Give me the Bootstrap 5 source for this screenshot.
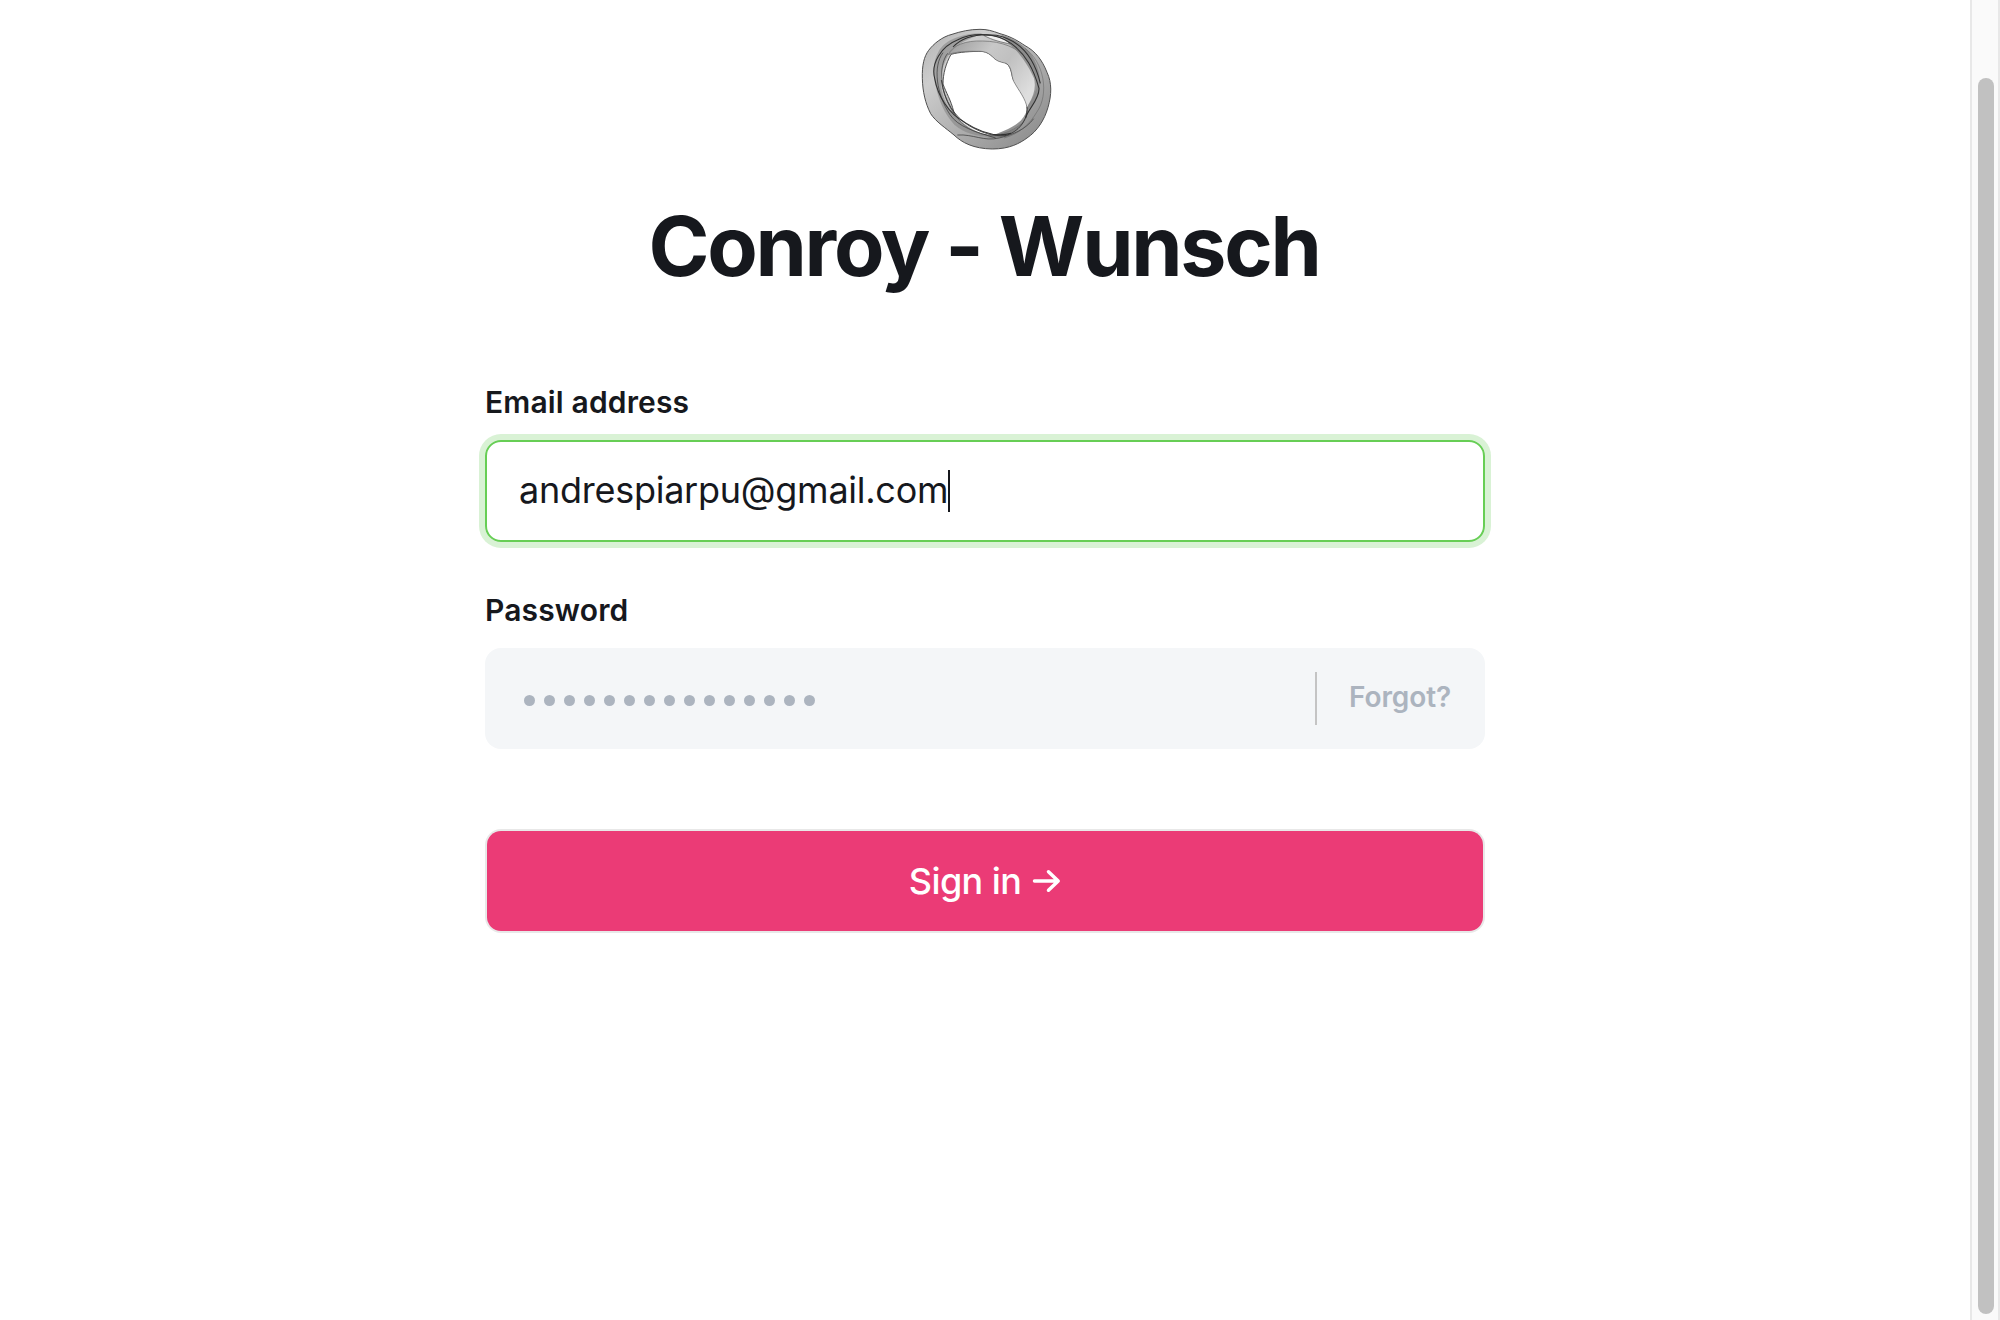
<!DOCTYPE html>
<html lang="en">
<head>
<meta charset="utf-8">
<meta name="viewport" content="width=device-width, initial-scale=1">
<title>Conroy - Wunsch</title>
<link href="https://cdn.jsdelivr.net/npm/bootstrap@5.3.0/dist/css/bootstrap.min.css" rel="stylesheet">
<style>
body{font-family:Inter,"Liberation Sans",sans-serif;color:#16181d;background:#fff}
.page-shell{height:1320px}
.login-form{width:1000px;margin-top:88px}
.brand-ring{width:150px;height:140px;margin-top:20px}
.brand-title{font-size:82.5px;font-weight:700;line-height:100px;letter-spacing:-2.3px;margin:36px 0 0;padding-right:2px}
.field-label{font-size:30px;font-weight:600;line-height:36px;letter-spacing:.15px;margin:0 0 20px}
.field-box{border-radius:16px;padding:0 33px}
.email-box{height:102px;border:2px solid #67ce55;box-shadow:0 0 0 6px #d9f2d5;font-size:36px;letter-spacing:-.26px;padding-left:32px;margin-bottom:50px}
.email-text{padding-bottom:2px}
.caret{width:2px;height:42px;background:#16181d}
.password-box{height:101px;background:#f4f6f8;color:#acb4bf;margin-bottom:80px}
.dots{gap:9.04px;margin:4px 0 0 5.5px}
.dots span{width:11px;height:11px;border-radius:50%;background:#acb4bf}
.forgot-link{height:53px;border-left:2px solid #c4c4c4;padding:0 1px 4px 32px;font-size:28px;font-weight:600;letter-spacing:-.12px;color:#acb4bf}
.sign-btn{height:104px;border:2px solid rgba(0,0,0,.09);border-radius:16px;background:#eb3b76 padding-box;color:#fff;font-size:36px;font-weight:500}
.sign-text{letter-spacing:-.6px}
.sign-arrow{margin-left:11px}
.scroll-track{width:30px;background:#fafafa;border:solid #e8e8e8;border-width:0 2px;padding:78px 4px 6px 6px}
.scroll-thumb{width:16px;border-radius:8px;background:#c1c1c1}
</style>
</head>
<body>
<div class="page-shell d-flex overflow-hidden">
  <main class="flex-grow-1 d-flex flex-column align-items-center">
    <svg class="brand-ring flex-shrink-0" viewBox="0 0 450 420" aria-hidden="true">
      <defs>
        <linearGradient id="band" x1="0" y1="0" x2="1" y2="1"><stop offset="0" stop-color="#b0b0b0"/><stop offset=".25" stop-color="#cdcdcd"/><stop offset=".5" stop-color="#b5b5b5"/><stop offset="1" stop-color="#858585"/></linearGradient>
        <linearGradient id="fold" x1="0" y1="0" x2="1" y2=".6"><stop offset="0" stop-color="#999"/><stop offset=".4" stop-color="#c8c8c8"/><stop offset=".62" stop-color="#c0c0c0"/><stop offset="1" stop-color="#dedede"/></linearGradient>
        <linearGradient id="shade" x1="0" y1="0" x2="0" y2="1"><stop offset="0" stop-color="#808080"/><stop offset=".5" stop-color="#8c8c8c"/><stop offset="1" stop-color="#7c7c7c"/></linearGradient>
      </defs>
      <path fill="url(#band)" fill-rule="evenodd" stroke="#505050" stroke-width="3" d="M210 28C180 28 153 34 126 43C97 50 71 71 56 91C42 110 36 135 37 175C38 215 46 250 62 281C77 305 107 324 132 345C156 368 190 386 247 387C300 387 330 369 351 354C381 334 403 301 414 262C425 224 426 189 411 157C397 121 376 93 345 77C324 63 304 50 270 41C246 32 231 28 210 28ZM123 103C108 130 99 161 99 192C108 218 123 240 131 275C147 307 177 332 216 342C258 354 307 335 336 310C352 293 354 267 350 246C337 221 319 196 309 177C303 157 304 138 285 128C269 124 260 121 251 113C241 102 230 96 217 94C184 94 148 96 123 103Z"/>
      <path fill="url(#fold)" stroke="#666" stroke-width="2" d="M115 104C127 76 166 61 218 63C276 64 324 83 353 119C377 147 386 177 381 205C374 230 362 247 351 264C348 237 326 212 311 184C303 166 307 141 288 130C267 125 259 123 246 109C233 97 221 93 200 94C164 93 134 96 115 104Z"/>
      <path fill="url(#shade)" d="M270 43C320 58 358 86 373 119C391 154 395 194 386 221C376 244 360 260 351 276C349 299 334 323 306 340C282 354 251 355 231 352C273 337 320 319 336 297C350 279 353 265 355 254C373 226 378 200 372 175C356 139 337 112 318 91C301 78 290 59 270 43Z" opacity=".85"/>
      <path fill="#868686" fill-opacity=".6" d="M218 40C160 40 106 57 85 96C67 126 68 168 78 202C86 239 103 283 133 314C161 339 197 347 237 350C188 331 155 311 126 276C101 245 91 208 93 174C98 131 114 98 144 76C166 60 195 50 218 40Z"/>
      <path fill="#efefef" stroke="#555" stroke-width="2" d="M221 46C246 44 279 51 301 72C277 67 247 61 221 46Z"/>
      <g fill="none" stroke="#303030" stroke-width="3.2">
        <path d="M347 294C354 266 388 240 387 205C371 148 349 104 303 70C260 38 190 36 142 60C94 79 62 130 74 175C83 227 115 280 164 307C200 330 252 355 303 340"/>
        <path d="M129 81C156 53 202 40 259 46C329 60 371 107 391 190"/>
        <path d="M94 180C101 241 136 293 177 317C211 337 251 350 285 347C325 337 354 300 351 262" stroke-width="2.5"/>
        <path d="M113 100C83 139 91 222 132 280" stroke-width="2"/>
        <path d="M99 98C68 139 79 222 120 284C144 320 194 335 257 354" stroke-width="2"/>
        <path d="M142 345C190 342 221 365 267 354C307 345 346 329 371 296" stroke-width="2"/>
      </g>
      <path d="M345 85C402 126 419 222 380 277C360 311 328 342 282 354" fill="none" stroke="#555" stroke-opacity=".65" stroke-width="2"/>
    </svg>
    <h1 class="brand-title text-center">Conroy - Wunsch</h1>
    <form class="login-form">
      <label class="field-label d-block">Email address</label>
      <div class="field-box email-box d-flex align-items-center"><span class="email-text">andrespiarpu@gmail.com</span><span class="caret"></span></div>
      <label class="field-label d-block">Password</label>
      <div class="field-box password-box d-flex align-items-center justify-content-between">
        <div class="dots d-flex"><span></span><span></span><span></span><span></span><span></span><span></span><span></span><span></span><span></span><span></span><span></span><span></span><span></span><span></span><span></span></div>
        <a class="forgot-link d-flex align-items-center text-decoration-none">Forgot?</a>
      </div>
      <button type="button" class="sign-btn w-100 d-flex align-items-center justify-content-center p-0"><span class="sign-text">Sign in</span>
        <svg class="sign-arrow" width="29" height="24" viewBox="0 0 29 24" fill="none" stroke="#fff" stroke-width="3.5" stroke-linecap="round" stroke-linejoin="round"><path d="M2.5 12H26M16.5 2.8L26.2 12L16.5 21.2"/></svg>
      </button>
    </form>
  </main>
  <div class="scroll-track d-flex flex-shrink-0"><div class="scroll-thumb"></div></div>
</div>
<script src="https://cdn.jsdelivr.net/npm/bootstrap@5.3.0/dist/js/bootstrap.bundle.min.js"></script>
</body>
</html>
